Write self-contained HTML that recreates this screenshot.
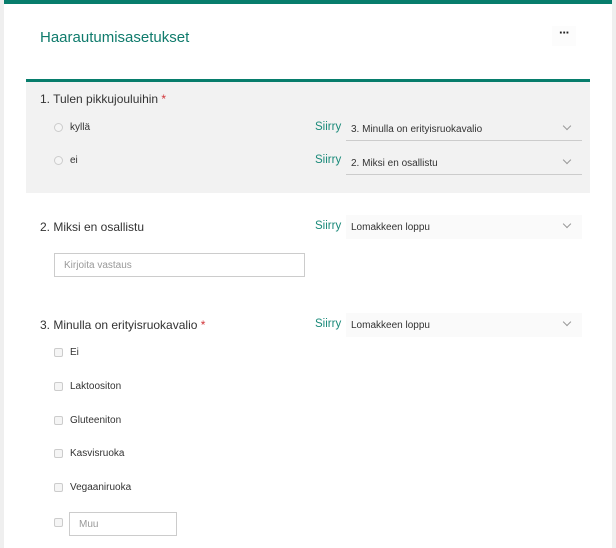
<!DOCTYPE html>
<html><head><meta charset="utf-8"><style>
*{margin:0;padding:0;box-sizing:border-box}
body{width:616px;height:548px;background:#efefef;font-family:"Liberation Sans",sans-serif;position:relative;overflow:hidden;color:#333}
.card{position:absolute;left:4px;top:0;width:608px;height:548px;background:#fff;border-top:4px solid #077d6c}
.a{position:absolute;white-space:nowrap}
.title{left:40px;top:29px;font-size:15px;color:#0f7b6c}
.dots{left:552px;top:26px;width:24px;height:20px;background:#fcfcfc;font-size:13px;font-weight:bold;text-align:center;line-height:14px;color:#222;letter-spacing:-1px}
.sec1{left:26px;top:79px;width:564px;height:114px;background:#f2f2f2;border-top:3px solid #077d6c}
.q{font-size:12px;color:#333}
.star{color:#d13438}
.opt{font-size:10px;color:#333}
.radio{width:9px;height:9px;border:1px solid #ccc;border-radius:50%;background:#f5f5f5}
.siirry{font-size:11.5px;color:#1b8a7a}
.dd{width:236px;height:24px;font-size:10px;color:#333;padding:7px 0 0 5px}
.dd.ul{border-bottom:1px solid #ccc;background:#f2f2f2}
.dd.w{background:#fafafa}
.chev{position:absolute;right:12px;top:6px;width:6px;height:6px;border-right:1px solid #999;border-bottom:1px solid #999;transform:rotate(45deg)}
.cb{width:9px;height:9px;border:1px solid #ccc;background:#f5f5f5;border-radius:2px}
.inp{border:1px solid #ccc;font-size:10px;color:#999;padding:6px 0 0 9px}
</style></head><body>
<div class="card"></div>
<div class="a title">Haarautumisasetukset</div>
<div class="a dots">···</div>
<div class="a sec1"></div>
<div class="a q" style="left:40px;top:92px">1. Tulen pikkujouluihin <span class="star">*</span></div>
<div class="a radio" style="left:54px;top:123px"></div>
<div class="a opt" style="left:70px;top:122px">kyllä</div>
<div class="a radio" style="left:54px;top:156px"></div>
<div class="a opt" style="left:70px;top:155px">ei</div>
<div class="a siirry" style="left:315px;top:121px">Siirry</div>
<div class="a dd ul" style="left:346px;top:117px">3. Minulla on erityisruokavalio<span class="chev"></span></div>
<div class="a siirry" style="left:315px;top:154px">Siirry</div>
<div class="a dd ul" style="left:346px;top:151px">2. Miksi en osallistu<span class="chev"></span></div>

<div class="a q" style="left:40px;top:220px">2. Miksi en osallistu</div>
<div class="a siirry" style="left:315px;top:220px">Siirry</div>
<div class="a dd w" style="left:346px;top:215px">Lomakkeen loppu<span class="chev"></span></div>
<div class="a inp" style="left:54px;top:253px;width:251px;height:24px">Kirjoita vastaus</div>

<div class="a q" style="left:40px;top:318px">3. Minulla on erityisruokavalio <span class="star">*</span></div>
<div class="a siirry" style="left:315px;top:318px">Siirry</div>
<div class="a dd w" style="left:346px;top:313px">Lomakkeen loppu<span class="chev"></span></div>
<div class="a cb" style="left:54px;top:348px"></div><div class="a opt" style="left:70px;top:347px">Ei</div>
<div class="a cb" style="left:54px;top:382px"></div><div class="a opt" style="left:70px;top:381px">Laktoositon</div>
<div class="a cb" style="left:54px;top:416px"></div><div class="a opt" style="left:70px;top:415px">Gluteeniton</div>
<div class="a cb" style="left:54px;top:449px"></div><div class="a opt" style="left:70px;top:448px">Kasvisruoka</div>
<div class="a cb" style="left:54px;top:483px"></div><div class="a opt" style="left:70px;top:482px">Vegaaniruoka</div>
<div class="a cb" style="left:54px;top:518px"></div>
<div class="a inp" style="left:69px;top:512px;width:108px;height:24px">Muu</div>
</body></html>
